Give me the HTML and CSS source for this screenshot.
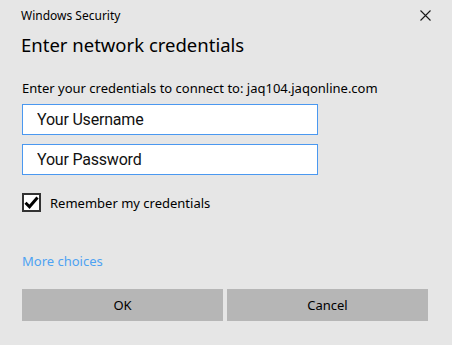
FILE: index.html
```html
<!DOCTYPE html>
<html lang="en">
<head>
    <meta charset="UTF-8">
    <meta name="viewport" content="width=device-width, initial-scale=1.0">
    <title>Windows Security</title>
    <link rel="stylesheet" href="styles.css">
</head>
<body>
    <div class="dialog">
        <div class="titlebar">
            <span class="app-name">Windows Security</span>
            <span class="close">
                <svg width="11" height="11" viewBox="0 0 11 11">
                    <path d="M0.5 0.5 L10.5 10.5 M10.5 0.5 L0.5 10.5" stroke="#1a1a1a" stroke-width="1.1" fill="none"/>
                </svg>
            </span>
        </div>
        <h1>Enter network credentials</h1>
        <p class="hint">Enter your credentials to connect to: jaq104.jaqonline.com</p>
        <form id="login-form">
            <input type="text" class="field" value="Your Username">
            <input type="password" class="field pw" value="" placeholder="Your Password">
            <label class="remember">
                <span class="box">
                    <svg width="15" height="13" viewBox="0 0 15 13">
                        <path d="M1.5 6.8 L5.5 10.8 L13.5 1.5" stroke="#000" stroke-width="3" fill="none"/>
                    </svg>
                </span>
                Remember my credentials
            </label>
            <a class="more" href="#">More choices</a>
            <div class="buttons">
                <button type="button">OK</button>
                <button type="button">Cancel</button>
            </div>
        </form>
    </div>
</body>
</html>
```

FILE: styles.css
```css
body {
    margin: 0;
    background-color: #e6e6e6;
    font-family: "Noto Sans", "Open Sans", sans-serif;
    color: #000;
}
.dialog {
    padding: 4px 24px 0 22px;
}
.titlebar {
    display: flex;
    justify-content: space-between;
    align-items: center;
    height: 22px;
}
.app-name {
    font-size: 12px;
    margin-left: -1px;
}
.close {
    display: flex;
    margin-right: -3px;
}
h1 {
    font-size: 18.5px;
    font-weight: normal;
    margin: 6px 0 0 -1px;
    line-height: 26px;
}
.hint {
    font-size: 13px;
    margin: 21px 0 0;
    line-height: 18px;
}
form {
    display: flex;
    flex-direction: column;
    align-items: flex-start;
}
.field {
    width: 296px;
    height: 31px;
    box-sizing: border-box;
    border: 1px solid #4a98f0;
    background: #fff;
    padding: 0 0 0 14px;
    margin-top: 7px;
    font-family: Roboto, "Noto Sans", sans-serif;
    font-size: 16px;
    letter-spacing: -0.2px;
    color: #111;
    outline: none;
}
.field::placeholder {
    color: #111;
}
.pw {
    margin-top: 9px;
}
.remember {
    display: flex;
    align-items: center;
    gap: 9px;
    margin-top: 18px;
    font-size: 13px;
}
.box {
    width: 19px;
    height: 19px;
    box-sizing: border-box;
    border: 2px solid #333;
    background: #fff;
    display: flex;
    align-items: center;
    justify-content: center;
}
.more {
    margin-top: 40px;
    font-size: 13px;
    color: #4ea2f2;
    text-decoration: none;
}
.buttons {
    display: flex;
    gap: 4px;
    margin-top: 19px;
    width: 406px;
}
.buttons button {
    flex: 1;
    height: 32px;
    border: none;
    background: #b6b6b6;
    font-family: "Noto Sans", "Open Sans", sans-serif;
    font-size: 13px;
    color: #000;
}
```
